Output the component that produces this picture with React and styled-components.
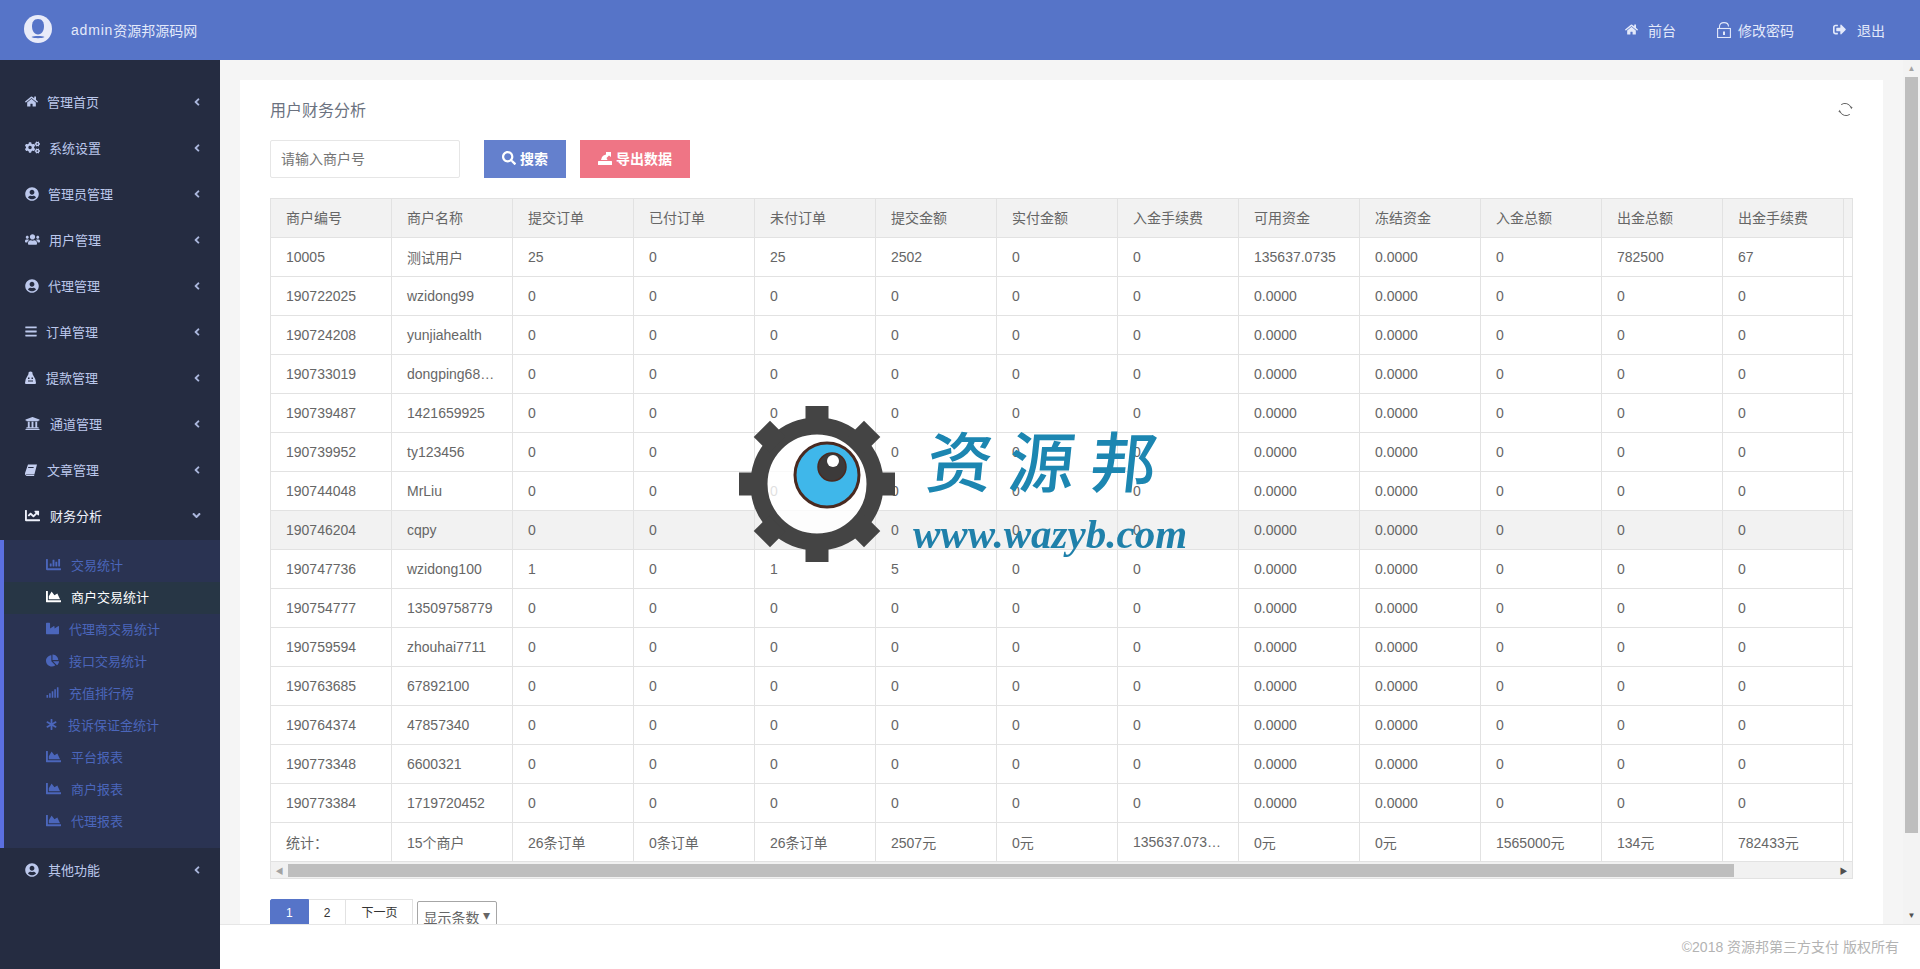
import React from "react";
import styled, { createGlobalStyle } from "styled-components";
import {
  FaHome,
  FaCogs,
  FaUserCircle,
  FaUsers,
  FaBars,
  FaUniversity,
  FaChartLine,
  FaChartBar,
  FaChartArea,
  FaIndustry,
  FaChartPie,
  FaSignal,
  FaAsterisk,
  FaAngleLeft,
  FaAngleDown,
  FaSearch,
  FaSignOutAlt,
} from "react-icons/fa";

const FONT = `"Liberation Sans", "Noto Sans CJK SC", sans-serif`;

const GlobalStyle = createGlobalStyle`
  html, body {
    margin: 0;
    height: 100%;
    overflow: hidden;
    font-family: ${FONT};
    font-size: 14px;
    color: #666;
  }
  * { box-sizing: border-box; }
`;

const Page = styled.div`
  position: relative;
  width: 1920px;
  height: 969px;
  display: flex;
  flex-direction: column;
  overflow: hidden;
`;

const Header = styled.header`
  height: 60px;
  flex: none;
  background: #5674c8;
  color: #e3e9fa;
  display: flex;
  align-items: center;
  padding: 0 35px 1px 24px;
`;

const Avatar = styled.svg`
  width: 28px;
  height: 28px;
  margin-right: 19px;
  margin-top: -1px;
`;

const Brand = styled.span`
  letter-spacing: 0.8px;
`;

const HeaderLink = styled.a`
  display: flex;
  align-items: center;
  margin-left: ${(p) => p.$gap}px;
  color: #e3e9fa;
  svg {
    margin-right: ${(p) => p.$iconGap}px;
  }
`;

const HeaderRight = styled.div`
  margin-left: auto;
  display: flex;
`;

const Body = styled.div`
  flex: 1;
  display: flex;
  min-height: 0;
`;

const Sidebar = styled.aside`
  width: 220px;
  flex: none;
  background: #252c41;
  padding-top: 20px;
`;

const MenuRow = styled.div`
  height: 46px;
  display: flex;
  align-items: center;
  padding: 0 0 3px 25px;
  font-size: 13px;
  color: ${(p) => (p.$open ? "#eef1fb" : "#bcc8ec")};
  position: relative;
`;

const IconSlot = styled.span`
  display: flex;
  align-items: center;
  justify-content: flex-start;
  width: ${(p) => p.$w}px;
  margin-right: ${(p) => p.$gap}px;
  flex: none;
`;

const Caret = styled.span`
  margin-left: auto;
  margin-right: ${(p) => (p.$open ? 17 : 17)}px;
  display: flex;
  color: #aab6dc;
`;

const SubMenu = styled.div`
  background: #2a3352;
  border-left: 4px solid #5b6fe0;
  padding: 10px 0;
`;

const SubRow = styled.div`
  height: 32px;
  display: flex;
  align-items: center;
  padding: 0 0 3px 42px;
  font-size: 13px;
  color: ${(p) => (p.$active ? "#ffffff" : "#4b66bb")};
  background: ${(p) => (p.$active ? "#273645" : "transparent")};
`;

const Main = styled.div`
  flex: 1;
  min-width: 0;
  display: flex;
  flex-direction: column;
`;

const MainTop = styled.div`
  flex: 1;
  min-height: 0;
  display: flex;
  background: #f5f5f5;
`;

const Scroller = styled.div`
  flex: 1;
  min-width: 0;
  padding: 20px 20px 0;
  overflow: hidden;
`;

const VBar = styled.div`
  width: 17px;
  flex: none;
  background: #f3f3f3;
  display: flex;
  flex-direction: column;
  align-items: center;
`;

const VArrow = styled.div`
  height: 17px;
  flex: none;
  display: flex;
  align-items: center;
  justify-content: center;
  color: ${(p) => p.$color};
  font-size: 8px;
  line-height: 1;
  margin-top: ${(p) => (p.$end ? "auto" : "0")};
`;

const VThumb = styled.div`
  width: 13px;
  height: 756px;
  flex: none;
  background: #bebebe;
`;

const Card = styled.section`
  background: #fff;
  padding: 0 30px 30px;
`;

const CardHead = styled.div`
  height: 60px;
  display: flex;
  align-items: center;
  justify-content: space-between;
  padding-bottom: 2px;
  font-size: 16px;
  color: #6b7280;
`;

const Toolbar = styled.div`
  display: flex;
  align-items: stretch;
  height: 38px;
  margin-bottom: 20px;
`;

const SearchInput = styled.input`
  width: 190px;
  height: 38px;
  border: 1px solid #e6e6e6;
  border-radius: 2px;
  padding: 0 10px;
  margin-right: 24px;
  font: 14px ${FONT};
  color: #666;
  &::placeholder {
    color: #757575;
  }
`;

const ActionButton = styled.button`
  border: 0;
  height: 38px;
  width: ${(p) => p.$w}px;
  margin-right: 14px;
  background: ${(p) => p.$bg};
  color: #fff;
  font: bold 14px ${FONT};
  display: flex;
  align-items: center;
  justify-content: center;
  gap: 4px;
  padding: 0 0 2px;
`;

const TableBox = styled.div`
  width: 1583px;
  border: 1px solid #e2e2e2;
`;

const TableClip = styled.div`
  overflow: hidden;
`;

const Grid = styled.table`
  border-collapse: separate;
  border-spacing: 0;
  table-layout: fixed;
  width: 1694px;
`;

const Th = styled.th`
  width: 121px;
  height: 39px;
  padding: 0 15px 2px;
  font-weight: normal;
  text-align: left;
  color: #666;
  background: #f2f2f2;
  border-right: 1px solid #e2e2e2;
  border-bottom: 1px solid #e2e2e2;
`;

const Td = styled.td`
  width: 121px;
  height: 39px;
  padding: 0 15px 1px;
  color: #666;
  background: ${(p) => (p.$hover ? "#f2f2f2" : "#fff")};
  border-right: 1px solid #e2e2e2;
  border-bottom: 1px solid #e2e2e2;
  white-space: nowrap;
  overflow: hidden;
  text-overflow: ellipsis;
`;

const HBar = styled.div`
  height: 16px;
  background: #f1f1f1;
  display: flex;
  align-items: center;
`;

const HArrow = styled.div`
  width: 17px;
  flex: none;
  text-align: center;
  color: ${(p) => p.$color};
  font-size: 8px;
  margin-left: ${(p) => (p.$end ? "auto" : "0")};
`;

const HThumb = styled.div`
  width: 1446px;
  height: 13px;
  background: #bebebe;
`;

const Pager = styled.div`
  display: flex;
  align-items: flex-start;
  margin-top: 20px;
`;

const PageItem = styled.a`
  height: 30px;
  line-height: 27px;
  padding: 0 15px;
  font-size: 12px;
  border: 1px solid ${(p) => (p.$active ? "#5674c8" : "#e2e2e2")};
  border-left-width: ${(p) => (p.$first ? 1 : 0)}px;
  border-radius: ${(p) => (p.$first ? "2px 0 0 2px" : "0")};
  background: ${(p) => (p.$active ? "#5674c8" : "#fff")};
  color: ${(p) => (p.$active ? "#fff" : "#333")};
`;

const PageSize = styled.div`
  height: 30px;
  width: 80px;
  margin: 2px 0 0 4px;
  padding: 5px 6px 0 5px;
  border: 1px solid #a6a6a6;
  border-radius: 2px;
  color: #666;
  font-size: 14px;
  display: flex;
  justify-content: space-between;
`;

const Footer = styled.footer`
  height: 45px;
  flex: none;
  background: #fff;
  border-top: 1px solid #e6e6e6;
  display: flex;
  align-items: center;
  justify-content: flex-end;
  padding: 0 21px 2px 0;
  color: #b3b3b3;
`;

const Watermark = styled.div`
  position: absolute;
  left: 737px;
  top: 406px;
  width: 460px;
  height: 160px;
  pointer-events: none;
  display: flex;
`;

const WatermarkText = styled.div`
  margin-left: 16px;
  display: flex;
  flex-direction: column;
  filter: blur(0.4px);
`;

const WatermarkName = styled.div`
  margin: 18px 0 0 14px;
  font-size: 66px;
  line-height: 80px;
  letter-spacing: 16px;
  font-weight: 500;
  white-space: nowrap;
  color: #1c86b1;
  transform: skewX(-6deg);
`;

const WatermarkUrl = styled.div`
  margin-top: 8px;
  font: italic bold 41px/44px "Liberation Serif", serif;
  color: #1f80aa;
  white-space: nowrap;
`;

const BagIcon = () => (
  <svg width="11" height="13" viewBox="0 0 11 13">
    <path d="M3.5 3 L3.5 1.5 Q5.5 -0.5 7.5 1.5 L7.5 3 L8 4 Q11 8 11 12 Q11 13 10 13 L1 13 Q0 13 0 12 Q0 8 3 4Z" fill="#c5cff0" />
    <rect x="3" y="6.5" width="1.5" height="1.5" fill="#252c41" />
    <rect x="6.5" y="6.5" width="1.5" height="1.5" fill="#252c41" />
    <rect x="3" y="9.5" width="5" height="1" fill="#252c41" />
  </svg>
);

const BookIcon = () => (
  <svg width="12" height="12" viewBox="0 0 12 12">
    <path d="M3 0.5 L12 0.5 L9.5 10 L1.5 10 Q0.5 10 1 11.5 L0.2 11 Q-0.3 9.5 0.4 8Z" fill="#c5cff0" />
    <path d="M1 10.5 L9.5 10.5 L9 12 L1.5 12 Q0.7 11.5 1 10.5Z" fill="#c5cff0" />
    <rect x="4" y="3" width="5.5" height="1" fill="#252c41" transform="skewX(-14)" />
  </svg>
);

const LockIcon = () => (
  <svg width="14" height="16" viewBox="0 0 14 16" fill="none" stroke="#e3e9fa" strokeWidth="1.1">
    <path d="M2.5 6 L2.5 4.5 Q2.5 0.6 7 0.6 Q11.5 0.6 11.5 4.5" />
    <rect x="0.6" y="6.5" width="12.8" height="9" />
    <rect x="6" y="9.5" width="2" height="3.5" fill="#e3e9fa" stroke="none" />
  </svg>
);

const ExportIcon = () => (
  <svg width="14" height="14" viewBox="0 0 14 14" fill="#fff">
    <rect x="0" y="10" width="14" height="4" rx="0.5" />
    <path d="M3 9 L4 6 Q5 4 8 3.5 L8 1 L13 1 L13 6 L11 4.5 L8.5 7 L9.5 9Z" />
  </svg>
);

const RefreshIcon = () => (
  <svg width="15" height="15" viewBox="0 0 15 15" fill="none" stroke="#666" strokeWidth="1">
    <path d="M3.2 2.6 A6.5 6.5 0 0 1 13 5.5" />
    <path d="M11.8 12.4 A6.5 6.5 0 0 1 2 9.5" />
    <path d="M12 4 L14.6 5.2 L13.2 7.2Z" fill="#666" stroke="none" />
    <path d="M3 11 L0.4 9.8 L1.8 7.8Z" fill="#666" stroke="none" />
  </svg>
);

const sideMenu = [
  { label: "管理首页", icon: <FaHome size={13} />, w: 13, gap: 9 },
  { label: "系统设置", icon: <FaCogs size={15} />, w: 15, gap: 9 },
  { label: "管理员管理", icon: <FaUserCircle size={14} />, w: 14, gap: 9 },
  { label: "用户管理", icon: <FaUsers size={15} />, w: 15, gap: 9 },
  { label: "代理管理", icon: <FaUserCircle size={14} />, w: 14, gap: 9 },
  { label: "订单管理", icon: <FaBars size={13} />, w: 12, gap: 9 },
  { label: "提款管理", icon: <BagIcon />, w: 11, gap: 10 },
  { label: "通道管理", icon: <FaUniversity size={15} />, w: 15, gap: 10 },
  { label: "文章管理", icon: <BookIcon />, w: 12, gap: 10 },
];

const subMenu = [
  { label: "交易统计", icon: <FaChartBar size={15} />, w: 15, gap: 10 },
  { label: "商户交易统计", icon: <FaChartArea size={15} />, w: 15, gap: 10, active: true },
  { label: "代理商交易统计", icon: <FaIndustry size={13} />, w: 13, gap: 10 },
  { label: "接口交易统计", icon: <FaChartPie size={13} />, w: 13, gap: 10 },
  { label: "充值排行榜", icon: <FaSignal size={13} />, w: 13, gap: 10 },
  { label: "投诉保证金统计", icon: <FaAsterisk size={11} />, w: 11, gap: 11 },
  { label: "平台报表", icon: <FaChartArea size={15} />, w: 15, gap: 10 },
  { label: "商户报表", icon: <FaChartArea size={15} />, w: 15, gap: 10 },
  { label: "代理报表", icon: <FaChartArea size={15} />, w: 15, gap: 10 },
];

const columns = [
  "商户编号", "商户名称", "提交订单", "已付订单", "未付订单", "提交金额", "实付金额",
  "入金手续费", "可用资金", "冻结资金", "入金总额", "出金总额", "出金手续费", "",
];

const zeroRow = (id, name, a = "0", b = "0", c = "0", d = "0") => [
  id, name, a, b, c, d, "0", "0", "0.0000", "0.0000", "0", "0", "0", "",
];

const rows = [
  ["10005", "测试用户", "25", "0", "25", "2502", "0", "0", "135637.0735", "0.0000", "0", "782500", "67", ""],
  zeroRow("190722025", "wzidong99"),
  zeroRow("190724208", "yunjiahealth"),
  zeroRow("190733019", "dongping68…"),
  zeroRow("190739487", "1421659925"),
  zeroRow("190739952", "ty123456"),
  zeroRow("190744048", "MrLiu"),
  zeroRow("190746204", "cqpy"),
  zeroRow("190747736", "wzidong100", "1", "0", "1", "5"),
  zeroRow("190754777", "13509758779"),
  zeroRow("190759594", "zhouhai7711"),
  zeroRow("190763685", "67892100"),
  zeroRow("190764374", "47857340"),
  zeroRow("190773348", "6600321"),
  zeroRow("190773384", "1719720452"),
  ["统计：", "15个商户", "26条订单", "0条订单", "26条订单", "2507元", "0元", "135637.073…", "0元", "0元", "1565000元", "134元", "782433元", ""],
];

const Gear = () => (
  <svg width="160" height="160" viewBox="0 0 160 160">
    <circle cx="80" cy="78" r="58" fill="#fff" fillOpacity="0.8" stroke="#444" strokeWidth="17" />
    {[0, 45, 90, 135, 180, 225, 270, 315].map((a) => (
      <rect key={a} x="68.5" y="0" width="23" height="22" fill="#444" transform={`rotate(${a} 80 78)`} />
    ))}
    <circle cx="90" cy="69" r="32" fill="#3fb7ea" stroke="#4a2a20" strokeWidth="3" />
    <circle cx="95" cy="61" r="14" fill="#3c3a3a" stroke="#4a2a20" strokeWidth="1.5" />
    <circle cx="96" cy="55" r="6" fill="#fff" />
  </svg>
);

export default function App() {
  return (
    <Page>
      <GlobalStyle />
      <Header>
        <Avatar viewBox="0 0 28 28">
          <circle cx="14" cy="14" r="14" fill="#e8ebf9" />
          <path d="M14 4 C9.6 4 8 7.5 8 11.5 C8 15.5 10.2 19.5 14 19.5 C17.8 19.5 20 15.5 20 11.5 C20 7.5 18.4 4 14 4Z" fill="#5674c8" />
          <path d="M7.5 22 C9.5 20.6 18.5 20.6 20.5 22 C18.5 23.6 9.5 23.6 7.5 22Z" fill="#5674c8" />
        </Avatar>
        <Brand>admin</Brand>资源邦源码网
        <HeaderRight>
          <HeaderLink $gap={0} $iconGap={10}>
            <FaHome size={13} />前台
          </HeaderLink>
          <HeaderLink $gap={41} $iconGap={7}>
            <LockIcon />修改密码
          </HeaderLink>
          <HeaderLink $gap={39} $iconGap={11}>
            <FaSignOutAlt size={13} />退出
          </HeaderLink>
        </HeaderRight>
      </Header>
      <Body>
        <Sidebar>
          {sideMenu.map((item) => (
            <MenuRow key={item.label}>
              <IconSlot $w={item.w} $gap={item.gap}>{item.icon}</IconSlot>
              {item.label}
              <Caret><FaAngleLeft size={12} /></Caret>
            </MenuRow>
          ))}
          <MenuRow $open>
            <IconSlot $w={15} $gap={10}><FaChartLine size={15} /></IconSlot>
            财务分析
            <Caret $open><FaAngleDown size={13} /></Caret>
          </MenuRow>
          <SubMenu>
            {subMenu.map((item) => (
              <SubRow key={item.label} $active={item.active}>
                <IconSlot $w={item.w} $gap={item.gap}>{item.icon}</IconSlot>
                {item.label}
              </SubRow>
            ))}
          </SubMenu>
          <MenuRow>
            <IconSlot $w={14} $gap={9}><FaUserCircle size={14} /></IconSlot>
            其他功能
            <Caret><FaAngleLeft size={12} /></Caret>
          </MenuRow>
        </Sidebar>
        <Main>
          <MainTop>
            <Scroller>
              <Card>
                <CardHead>
                  用户财务分析
                  <RefreshIcon />
                </CardHead>
                <Toolbar>
                  <SearchInput placeholder="请输入商户号" />
                  <ActionButton $w={82} $bg="#6480cd"><FaSearch size={14} />搜索</ActionButton>
                  <ActionButton $w={110} $bg="#ef7585"><ExportIcon />导出数据</ActionButton>
                </Toolbar>
                <TableBox>
                  <TableClip>
                    <Grid>
                      <thead>
                        <tr>{columns.map((c, i) => <Th key={i}>{c}</Th>)}</tr>
                      </thead>
                      <tbody>
                        {rows.map((row, r) => (
                          <tr key={r}>
                            {row.map((v, i) => <Td key={i} $hover={r === 7}>{v}</Td>)}
                          </tr>
                        ))}
                      </tbody>
                    </Grid>
                  </TableClip>
                  <HBar>
                    <HArrow $color="#a3a3a3">◀</HArrow>
                    <HThumb />
                    <HArrow $color="#505050" $end>▶</HArrow>
                  </HBar>
                </TableBox>
                <Pager>
                  <PageItem $first $active>1</PageItem>
                  <PageItem>2</PageItem>
                  <PageItem>下一页</PageItem>
                  <PageSize>显示条数<span>▾</span></PageSize>
                </Pager>
              </Card>
            </Scroller>
            <VBar>
              <VArrow $color="#a3a3a3">▲</VArrow>
              <VThumb />
              <VArrow $color="#505050" $end>▼</VArrow>
            </VBar>
          </MainTop>
          <Footer>©2018 资源邦第三方支付 版权所有</Footer>
        </Main>
      </Body>
      <Watermark>
        <Gear />
        <WatermarkText>
          <WatermarkName>资源邦</WatermarkName>
          <WatermarkUrl>www.wazyb.com</WatermarkUrl>
        </WatermarkText>
      </Watermark>
    </Page>
  );
}
